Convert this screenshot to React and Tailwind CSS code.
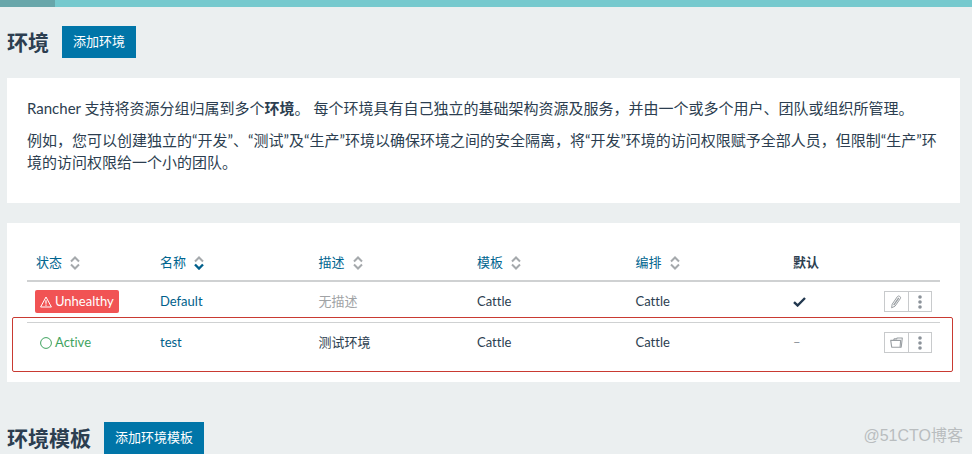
import React, { useState } from "react";

const COLUMNS = [
  { id: "state", label: "状态", sortable: true, width: "w-[124px]" },
  { id: "name", label: "名称", sortable: true, width: "" },
  { id: "description", label: "描述", sortable: true, width: "" },
  { id: "template", label: "模板", sortable: true, width: "" },
  { id: "orchestration", label: "编排", sortable: true, width: "" },
];

const ENVIRONMENTS = [
  { name: "Default", state: "Unhealthy", description: "", template: "Cattle", orchestration: "Cattle", isDefault: true },
  { name: "test", state: "Active", description: "测试环境", template: "Cattle", orchestration: "Cattle", isDefault: false },
];

function SortIcon({ active }) {
  return (
    <svg viewBox="0 0 10 14" className="w-[10px] h-[14px]" fill="none" strokeWidth="2" aria-hidden="true">
      <path d="M1 5.5 5 1.5l4 4" stroke="#a5a9ac" />
      <path d="m1 8.5 4 4 4-4" stroke={active ? "#005f8b" : "#a5a9ac"} strokeWidth={active ? 2.4 : 2} />
    </svg>
  );
}

function AlertIcon() {
  return (
    <svg viewBox="0 0 12 12" className="w-3 h-3" fill="none" stroke="currentColor" aria-hidden="true">
      <path d="M6 1 11.4 11H.6Z" strokeLinejoin="round" />
      <path d="M6 4.2v3.6M6 8.6v1.2" strokeWidth="1.2" />
    </svg>
  );
}

function CircleIcon() {
  return (
    <svg viewBox="0 0 12 12" className="w-3 h-3" fill="none" stroke="currentColor" aria-hidden="true">
      <circle cx="6" cy="6" r="5.4" />
    </svg>
  );
}

function CheckIcon() {
  return (
    <svg viewBox="0 0 13 10" className="w-[13px] h-[10px]" fill="none" stroke="#22384f" strokeWidth="2.4" role="img" aria-label="默认">
      <path d="m1 5.2 3.6 3.3L12 1" />
    </svg>
  );
}

function PencilIcon() {
  return (
    <svg viewBox="0 0 12 14" className="w-3 h-[14px]" fill="none" stroke="#9a9fa3" strokeLinejoin="round" aria-hidden="true">
      <path d="M1.6 12.8 2.2 9.2 7.4 1.6Q8.4.5 9.7 1.3t.7 2.2L5 11.2Z" />
      <path d="M3.7 10.2 8.8 2.8" strokeWidth="1.4" />
    </svg>
  );
}

function FolderIcon() {
  return (
    <svg viewBox="0 0 13 11" className="w-[13px] h-[11px]" fill="none" stroke="#9a9fa3" strokeWidth="1.1" strokeLinejoin="round" aria-hidden="true">
      <path d="M1.7 10.2.7 3.4h9.9l-.5 6.8Z" />
      <path d="M3.6 3.2 4.2 1.9h2.4l.5-.9h5.2l-1.1 9.2h-1.1" />
    </svg>
  );
}

function DotsIcon() {
  return (
    <svg viewBox="0 0 4 14" className="w-1 h-[14px]" fill="#8b9299" aria-hidden="true">
      <circle cx="2" cy="2" r="1.8" />
      <circle cx="2" cy="7" r="1.8" />
      <circle cx="2" cy="12" r="1.8" />
    </svg>
  );
}

function StateBadge({ state }) {
  const bad = state === "Unhealthy";
  return (
    <span className={`inline-flex items-center gap-[3px] h-[23px] px-[5px] rounded-xs align-middle ${bad ? "bg-[#f15354] text-white" : "text-[#3fa35f]"}`}>
      {bad ? <AlertIcon /> : <CircleIcon />}
      {state}
    </span>
  );
}

function SectionHeader({ title, action }) {
  return (
    <div className="flex items-center gap-[13px]">
      <h1 className="text-[21px] leading-8 font-bold">{title}</h1>
      <button type="button" className="h-8 px-[11px] bg-[#0075a8] hover:bg-[#005f8b] text-white text-[13px]">{action}</button>
    </div>
  );
}

export default function App() {
  const [sortBy, setSortBy] = useState("name");

  const rows = [...ENVIRONMENTS].sort((a, b) => (a[sortBy] < b[sortBy] ? -1 : a[sortBy] > b[sortBy] ? 1 : 0));

  return (
    <div className="relative min-h-screen bg-[#ebeff0] text-[#2c3e50] font-[Lato,'Noto_Sans_CJK_SC',sans-serif] [font-variant-ligatures:none]" lang="zh-CN">
      <div className="h-[7px] bg-[#76c9ce]">
        <div className="h-full w-[55px] bg-[#68a6aa]" />
      </div>

      <main className="pl-[7px] pr-3 pt-[19px]">
        <SectionHeader title="环境" action="添加环境" />

        <section className="mt-5 bg-white px-5 pt-[19px] pb-5 text-[15px] leading-[22px]">
          <p className="mb-[10px]">
            Rancher 支持将资源分组归属到多个<b>环境</b>。 每个环境具有自己独立的基础架构资源及服务，并由一个或多个用户、团队或组织所管理。
          </p>
          <p className="mb-[10px]">
            例如，您可以创建独立的“开发”、“测试”及“生产”环境以确保环境之间的安全隔离，将“开发”环境的访问权限赋予全部人员，但限制“生产”环境的访问权限给一个小的团队。
          </p>
        </section>

        <section className="relative mt-5 bg-white px-5 pt-5 pb-[19px] text-[13px]">
          <table className="w-full table-fixed border-collapse text-left">
            <thead>
              <tr className="h-[38px] border-b-2 border-[#cfd1d2]">
                {COLUMNS.map((c) => (
                  <th key={c.id} className={`${c.width} p-0 pt-[2px] pl-[9px] font-normal`}>
                    <button type="button" onClick={() => setSortBy(c.id)} className="flex items-center gap-2 text-[#00658f]">
                      {c.label}
                      <SortIcon active={sortBy === c.id} />
                    </button>
                  </th>
                ))}
                <th className="w-[64px] p-0 pt-[2px] pl-2 font-bold">默认</th>
                <th className="w-[91px] p-0" aria-label="操作" />
              </tr>
            </thead>
            <tbody>
              {rows.map((env) => (
                <tr key={env.name} className="h-[41px] border-b border-[#cfd1d2] last:border-b-0">
                  <td className="p-0 pl-2"><StateBadge state={env.state} /></td>
                  <td className="p-0 pl-[9px]"><a href="#" className="text-[#005f8b]">{env.name}</a></td>
                  <td className="p-0 pl-[9px]">{env.description || <span className="text-[#a0a3a5]">无描述</span>}</td>
                  <td className="p-0 pl-[9px]">{env.template}</td>
                  <td className="p-0 pl-[9px]">{env.orchestration}</td>
                  <td className="p-0 pl-2">{env.isDefault ? <CheckIcon /> : <span className="text-[#8b9299]">–</span>}</td>
                  <td className="p-0 pr-2">
                    <div className="ml-auto flex w-12 h-[21px] border border-[#c8cacc] divide-x divide-[#c8cacc]">
                      <button type="button" aria-label={env.isDefault ? "编辑" : "切换"} className="flex flex-1 items-center justify-center">
                        {env.isDefault ? <PencilIcon /> : <FolderIcon />}
                      </button>
                      <button type="button" aria-label="更多" className="flex flex-1 items-center justify-center">
                        <DotsIcon />
                      </button>
                    </div>
                  </td>
                </tr>
              ))}
            </tbody>
          </table>
          {/* outline around the new environment's row */}
          <div className="pointer-events-none absolute left-[5px] right-[7px] bottom-[10px] h-[55px] rounded-xs border border-[#c93a32]" />
        </section>

        <div className="mt-10">
          <SectionHeader title="环境模板" action="添加环境模板" />
        </div>
      </main>

      <div className="pointer-events-none absolute right-[9px] bottom-2 text-[16px] leading-5 text-[#b9bdbf] font-['Liberation_Sans','Noto_Sans_CJK_SC',sans-serif]">@51CTO博客</div>
    </div>
  );
}
